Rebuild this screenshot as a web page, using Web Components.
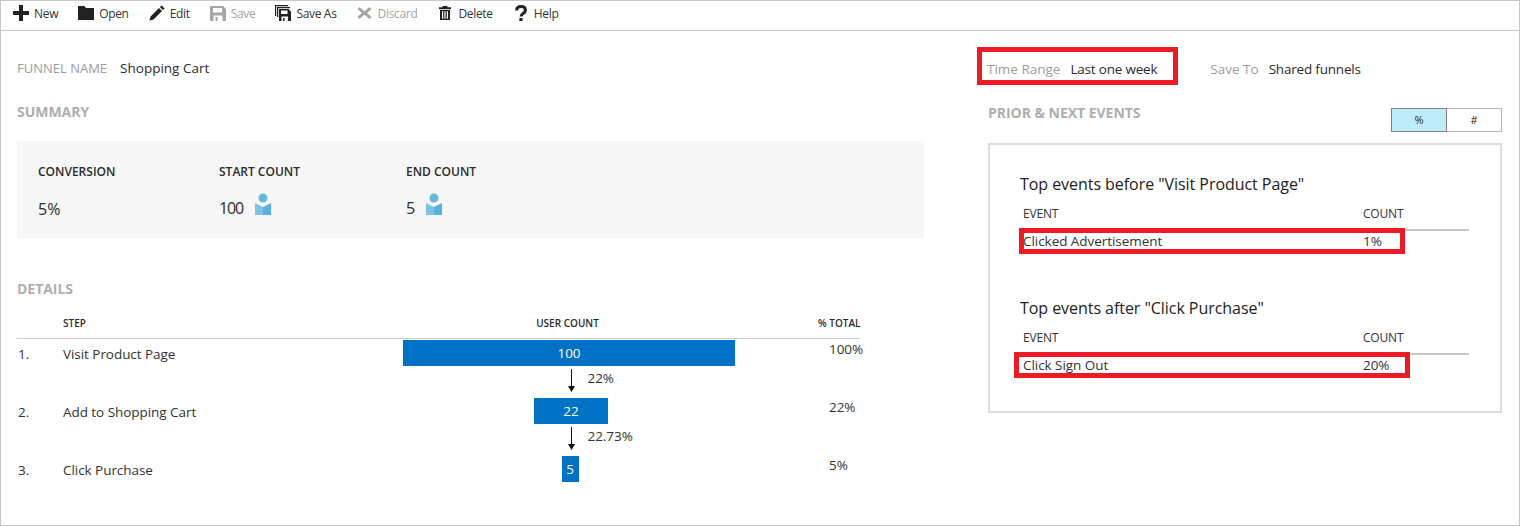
<!doctype html>
<html lang="en">
<head>
<meta charset="utf-8">
<title>Funnel</title>
<style>
  html, body { margin: 0; background: #fff; }
  body { font-family: "Open Sans", "Noto Sans", sans-serif; color: #2b2b2b; }
</style>
</head>
<body>
<fn-page>
  <fn-toolbar slot="toolbar">
    <fn-tool icon="new">New</fn-tool>
    <fn-tool icon="open">Open</fn-tool>
    <fn-tool icon="edit">Edit</fn-tool>
    <fn-tool icon="save" disabled>Save</fn-tool>
    <fn-tool icon="saveas">Save As</fn-tool>
    <fn-tool icon="discard" disabled>Discard</fn-tool>
    <fn-tool icon="delete">Delete</fn-tool>
    <fn-tool icon="help">Help</fn-tool>
  </fn-toolbar>

  <div slot="left">
    <fn-field label="FUNNEL NAME" value="Shopping Cart"></fn-field>
    <fn-heading style="margin-top:24px">SUMMARY</fn-heading>
    <fn-summary style="margin-top:19px"></fn-summary>
    <fn-heading style="margin-top:41px">DETAILS</fn-heading>
    <fn-funnel style="margin-top:14px"></fn-funnel>
  </div>

  <div slot="right">
    <fn-settings></fn-settings>
    <fn-prior-next style="margin-top:24px"></fn-prior-next>
  </div>
</fn-page>

<script>
(() => {
  const ICONS = {
    new: '<path d="M6 0h4v6h6v4h-6v6H6v-6H0V6h6z"/>',
    open: '<path d="M0 1h6.500l1.500 2h8v12H0z"/>',
    edit: '<path d="M12.600.4l3 3-1.700 1.700-3-3z"/><path d="M10 3l3 3-8.400 8.400L.4 15.600l1.200-4.200z"/>',
    save: '<path fill-rule="evenodd" d="M0 1h13l3 3v12H0zM3 3v4.500h9V3zM3.500 10.500V16h2v-4h2v4h5v-5.500z"/>',
    saveas: '<path d="M0 0h13v1.200H1.200V11H0z"/><path d="M2 2h13v1.200H3.200V12H2z"/><path fill-rule="evenodd" d="M4 4h9.500L16 6.500V16H4zM6 5.500V9h6.500V5.500zM6.500 11.500V16h1.500v-3h1.500v3h3.500v-4.500z"/>',
    discard: '<path d="M2.500 2L7.500 6.200 12.500 2l2 2.200L10 8l4.500 3.800-2 2.200-5-4.200-5 4.200-2-2.200L5 8 .5 4.200z"/>',
    delete: '<path d="M5.500 1h5v1.300H14v2H2v-2h3.500z"/><path fill-rule="evenodd" d="M3 5h10v10H3zM5 6.300V13.700h1.200V6.300zM7.400 6.300V13.700h1.200V6.300zM9.800 6.300V13.700H11V6.300z"/>',
    help: '<path d="M3.600 5.600C3.600 3 5.400 1.600 8 1.600c2.700 0 4.400 1.400 4.400 3.600 0 3.300-4.400 3.100-4.400 6.300" fill="none" stroke="currentColor" stroke-width="3"/><rect x="6.400" y="13" width="3.200" height="3"/>',
  };

  const define = (name, css, html, setup) => {
    customElements.define(name, class extends HTMLElement {
      connectedCallback() {
        if (this.shadowRoot) return;
        const root = this.attachShadow({ mode: "open" });
        root.innerHTML = "<style>" + css + "</style>" + (typeof html === "function" ? html(this) : html);
        if (setup) setup(root, this);
      }
    });
  };

  define("fn-page", `
    :host { display: block; width: 1520px; height: 526px; box-sizing: border-box; border: 1px solid #c8c8c8; overflow: hidden; }
    .main { display: grid; grid-template-columns: 907px 514px; column-gap: 64px; padding: 27px 0 0 16px; }
  `, `<slot name="toolbar"></slot><div class="main"><slot name="left"></slot><slot name="right"></slot></div>`);

  define("fn-toolbar", `
    :host { display: flex; align-items: center; gap: 20px; height: 30px; box-sizing: border-box; padding: 0 0 5px 12px; border-bottom: 1px solid #c8c8c8; }
  `, `<slot></slot>`);

  define("fn-tool", `
    :host { display: inline-flex; align-items: center; gap: 5px; font-size: 12px; letter-spacing: -.32px; color: #333; line-height: 16px; }
    :host([disabled]) { color: #a6a6a6; }
    .t { padding-top: 2px; }
    svg { width: 16px; height: 16px; fill: currentColor; flex: none; }
    :host(:not([disabled])) svg { color: #222; }
  `, (el) => `<svg viewBox="0 0 16 16" aria-hidden="true">${ICONS[el.getAttribute("icon")]}</svg><span class="t"><slot></slot></span>`);

  define("fn-field", `
    :host { display: flex; gap: 13px; line-height: 20px; font-size: 13.500px; }
    .l { color: #9c9c9c; font-size: 13px; }
    .v { color: #2b2b2b; }
  `, (el) => `<span class="l">${el.getAttribute("label")}</span><span class="v">${el.getAttribute("value")}</span>`);

  define("fn-heading", `
    :host { display: block; font-size: 14px; line-height: 20px; font-weight: 700; letter-spacing: -.03px; color: #aeaeae; }
  `, `<slot></slot>`);

  const PERSON = `<svg class="p" width="16" height="22" viewBox="0 0 16 22" aria-hidden="true">
      <circle cx="8" cy="5" r="4.500" fill="#68b8de"/>
      <path d="M0 10l8 4v8H0z" fill="#7dc4e3"/><path d="M16 10l-8 4v8h8z" fill="#58b1da"/>
    </svg>`;

  define("fn-summary", `
    :host { display: grid; grid-template-columns: 181px 187px 1fr; height: 97px; box-sizing: border-box; padding: 22px 0 0 21px; background: #f7f7f7; }
    .k { font-size: 12px; line-height: 18px; font-weight: 600; letter-spacing: 0; color: #2b2b2b; }
    .v { display: flex; align-items: flex-end; gap: 12px; margin-top: 12px; height: 24px; font-size: 16px; line-height: 24px; letter-spacing: -1.100px; }
    .p { position: relative; top: -2px; flex: none; }
    .v span { position: relative; top: 3px; }
    .v .pc { letter-spacing: 0; top: 4px; }
  `, `
    <div><div class="k">CONVERSION</div><div class="v"><span class="pc">5%</span></div></div>
    <div><div class="k">START COUNT</div><div class="v"><span>100</span>${PERSON}</div></div>
    <div><div class="k">END COUNT</div><div class="v"><span>5</span>${PERSON}</div></div>
  `);

  const ARROW = `<svg width="7" height="23" viewBox="0 0 7 23" aria-hidden="true"><path d="M3 0h1v17h3l-3.500 6L0 17h3z" fill="#111"/></svg>`;

  const STEPS = [
    { n: "1.", name: "Visit Product Page", count: 100, w: 332, off: -4, pct: "100%", next: "22%" },
    { n: "2.", name: "Add to Shopping Cart", count: 22, w: 74, off: 0, pct: "22%", next: "22.73%" },
    { n: "3.", name: "Click Purchase", count: 5, w: 17, off: -2, pct: "5%" },
  ];

  define("fn-funnel", `
    :host { display: block; width: 843px; font-size: 13.500px; letter-spacing: -.05px; color: #333; }
    .head, .row { display: grid; grid-template-columns: 46px 340px 336px 1fr; }
    .head { height: 25px; line-height: 20px; font-size: 10px; font-weight: 600; letter-spacing: 0; color: #2b2b2b; border-bottom: 1px solid #ccc; margin-bottom: 1px; }
    .head .uc { text-align: center; padding-right: 7px; }
    .head .tot { padding-left: 79px; white-space: nowrap; }
    .row { height: 58px; }
    .n, .name { line-height: 28px; }
    .n { padding-left: 1px; }
    .mid { display: flex; flex-direction: column; align-items: center; }
    .bar { height: 26px; line-height: 27px; background: #0072c6; color: #fff; text-align: center; }
    .link { position: relative; height: 32px; padding-top: 3px; box-sizing: border-box; }
    .link svg { display: block; }
    .link span { position: absolute; left: 20px; top: 3px; line-height: 18px; white-space: nowrap; }
    .pct { padding-left: 90px; line-height: 18px; }
  `, `
    <div class="head"><span></span><span>STEP</span><span class="uc">USER COUNT</span><span class="tot">% TOTAL</span></div>
    ${STEPS.map((s) => `<div class="row">
      <span class="n">${s.n}</span><span class="name">${s.name}</span>
      <div class="mid">
        <div class="bar" style="width:${s.w}px;margin-left:${s.off}px">${s.count}</div>
        ${s.next ? `<div class="link">${ARROW}<span>${s.next}</span></div>` : ""}
      </div>
      <span class="pct">${s.pct}</span>
    </div>`).join("")}
  `);

  define("fn-settings", `
    :host { display: flex; line-height: 20px; font-size: 13.500px; color: #2b2b2b; margin-left: -1px; margin-top: 1px; }
    .pair { display: flex; gap: 10px; position: relative; }
    .l { color: #9c9c9c; }
    .val { letter-spacing: -.2px; }
    .mark::after { content: ""; position: absolute; left: -10px; top: -12px; width: 201px; height: 38px; box-sizing: border-box; border: 5px solid #ed1c24; }
    .save { margin-left: 53px; }
  `, `
    <div class="pair mark"><span class="l">Time Range</span><span class="val">Last one week</span></div>
    <div class="pair save"><span class="l">Save To</span><span class="val">Shared funnels</span></div>
  `);

  define("fn-toggle", `
    :host { display: flex; width: 111px; height: 24px; box-sizing: border-box; font-size: 11px; line-height: 22px; text-align: center; color: #2b2b2b; }
    span { flex: 1; border: 1px solid #b4b4b4; box-sizing: border-box; }
    .on { background: #bdecfb; border-color: #808080; }
    .off { border-left: 0; }
  `, `<span class="on">%</span><span class="off">#</span>`);

  define("fn-prior-next", `
    :host { display: block; }
    .top { display: flex; justify-content: space-between; height: 40px; }
    fn-toggle { margin-top: 5px; }
    .box { height: 270px; box-sizing: border-box; border: 2px solid #ddd; padding: 27px 0 0 30px; }
    fn-events + fn-events { margin-top: 46px; }
  `, `
    <div class="top"><fn-heading>PRIOR &amp; NEXT EVENTS</fn-heading><fn-toggle></fn-toggle></div>
    <div class="box">
      <fn-events title-text='Top events before "Visit Product Page"' name="Clicked Advertisement" count="1%" mark-left="-4" mark-width="386"></fn-events>
      <fn-events title-text='Top events after "Click Purchase"' name="Click Sign Out" count="20%" mark-left="-9" mark-width="396"></fn-events>
    </div>
  `);

  define("fn-events", `
    :host { display: block; width: 449px; }
    h3 { margin: 0; font-size: 16px; font-weight: 400; line-height: 24px; letter-spacing: -.05px; color: #222; }
    .t { margin: 9px 0 0 3px; font-size: 12px; letter-spacing: -.2px; color: #333; }
    .r { display: grid; grid-template-columns: 340px 1fr; line-height: 18px; }
    .hd { padding-bottom: 6px; border-bottom: 2px solid #c8c8c8; }
    .row { position: relative; margin-top: 1px; font-size: 13.500px; letter-spacing: -.05px; }
    .row::after { content: ""; position: absolute; left: var(--mark-left); width: var(--mark-width); top: -4px; height: 26px; box-sizing: border-box; border: 5px solid #ed1c24; }
  `, (el) => `
    <h3>${el.getAttribute("title-text")}</h3>
    <div class="t">
      <div class="r hd"><span>EVENT</span><span>COUNT</span></div>
      <div class="r row" style="--mark-left:${el.getAttribute("mark-left")}px;--mark-width:${el.getAttribute("mark-width")}px"><span>${el.getAttribute("name")}</span><span>${el.getAttribute("count")}</span></div>
    </div>
  `);
})();
</script>
</body>
</html>
